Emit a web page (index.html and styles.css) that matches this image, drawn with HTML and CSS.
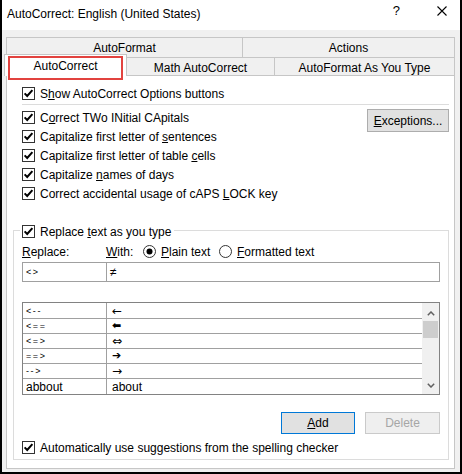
FILE: index.html
```html
<!DOCTYPE html>
<html>
<head>
<meta charset="utf-8">
<link rel="stylesheet" href="styles.css">
</head>
<body>
<div class="window">
  <div class="titlebar">
    <span class="title">AutoCorrect: English (United States)</span>
    <span class="help">?</span>
    <svg class="close" viewBox="0 0 10 10"><path d="M0.5 0.5 L9.5 9.5 M9.5 0.5 L0.5 9.5" stroke="#000" stroke-width="1.1" fill="none"/></svg>
  </div>
  <div class="client">
    <div class="tabrow back">
      <div class="tab t-autoformat">AutoFormat</div>
      <div class="tab t-actions">Actions</div>
    </div>
    <div class="tabrow front">
      <div class="tab sel">AutoCorrect<span class="focus"></span></div>
      <div class="tab t-math">Math AutoCorrect</div>
      <div class="tab t-afayt">AutoFormat As You Type</div>
    </div>
    <div class="panel">
      <div class="opt">
        <svg class="cb" viewBox="0 0 13 13"><rect x="0.5" y="0.5" width="12" height="12" fill="#fff" stroke="#333"/><path d="M2.6 6.4 L5.2 9 L10.4 3.2" fill="none" stroke="#000" stroke-width="2"/></svg>
        <span>S<u>h</u>ow AutoCorrect Options buttons</span>
      </div>
      <div class="sep"></div>
      <div class="sec">
        <div class="checks">
          <div class="opt">
            <svg class="cb" viewBox="0 0 13 13"><rect x="0.5" y="0.5" width="12" height="12" fill="#fff" stroke="#333"/><path d="M2.6 6.4 L5.2 9 L10.4 3.2" fill="none" stroke="#000" stroke-width="2"/></svg>
            <span>C<u>o</u>rrect TWo INitial CApitals</span>
          </div>
          <div class="opt">
            <svg class="cb" viewBox="0 0 13 13"><rect x="0.5" y="0.5" width="12" height="12" fill="#fff" stroke="#333"/><path d="M2.6 6.4 L5.2 9 L10.4 3.2" fill="none" stroke="#000" stroke-width="2"/></svg>
            <span>Capitalize first letter of <u>s</u>entences</span>
          </div>
          <div class="opt">
            <svg class="cb" viewBox="0 0 13 13"><rect x="0.5" y="0.5" width="12" height="12" fill="#fff" stroke="#333"/><path d="M2.6 6.4 L5.2 9 L10.4 3.2" fill="none" stroke="#000" stroke-width="2"/></svg>
            <span>Capitalize first letter of table <u>c</u>ells</span>
          </div>
          <div class="opt">
            <svg class="cb" viewBox="0 0 13 13"><rect x="0.5" y="0.5" width="12" height="12" fill="#fff" stroke="#333"/><path d="M2.6 6.4 L5.2 9 L10.4 3.2" fill="none" stroke="#000" stroke-width="2"/></svg>
            <span>Capitalize <u>n</u>ames of days</span>
          </div>
          <div class="opt">
            <svg class="cb" viewBox="0 0 13 13"><rect x="0.5" y="0.5" width="12" height="12" fill="#fff" stroke="#333"/><path d="M2.6 6.4 L5.2 9 L10.4 3.2" fill="none" stroke="#000" stroke-width="2"/></svg>
            <span>Correct accidental usage of cAPS <u>L</u>OCK key</span>
          </div>
        </div>
        <div class="btn exc"><span><u>E</u>xceptions...</span></div>
      </div>
      <div class="group">
        <div class="legend">
          <svg class="cb" viewBox="0 0 13 13"><rect x="0.5" y="0.5" width="12" height="12" fill="#fff" stroke="#333"/><path d="M2.6 6.4 L5.2 9 L10.4 3.2" fill="none" stroke="#000" stroke-width="2"/></svg>
          <span>Replace <u>t</u>ext as you type</span>
        </div>
        <div class="labels">
          <span class="lbl-replace"><u>R</u>eplace:</span>
          <span class="lbl-with"><u>W</u>ith:</span>
          <svg class="rb" viewBox="0 0 13 13"><circle cx="6.5" cy="6.5" r="6" fill="#fff" stroke="#333"/><circle cx="6.5" cy="6.5" r="3" fill="#000"/></svg>
          <span class="lbl-plain"><u>P</u>lain text</span>
          <svg class="rb" viewBox="0 0 13 13"><circle cx="6.5" cy="6.5" r="6" fill="#fff" stroke="#333"/></svg>
          <span><u>F</u>ormatted text</span>
        </div>
        <div class="inputs">
          <div class="in1"><span class="sym">&lt;&gt;</span></div>
          <div class="in2"><span>≠</span></div>
        </div>
        <div class="list">
          <div class="rows">
            <div class="row first"><div class="c1"><span class="sym">&lt;--</span></div><div class="c2"><span class="arr">←</span></div></div>
            <div class="row"><div class="c1"><span class="sym">&lt;==</span></div><div class="c2"><span class="arr bold">⬅</span></div></div>
            <div class="row"><div class="c1"><span class="sym">&lt;=&gt;</span></div><div class="c2"><span class="arr">⇔</span></div></div>
            <div class="row"><div class="c1"><span class="sym">==&gt;</span></div><div class="c2"><span class="arr bold">➔</span></div></div>
            <div class="row"><div class="c1"><span class="sym">--&gt;</span></div><div class="c2"><span class="arr">→</span></div></div>
            <div class="row last"><div class="c1"><span>abbout</span></div><div class="c2"><span>about</span></div></div>
          </div>
          <div class="sb">
            <div class="sb-btn up"><svg viewBox="0 0 8 5"><path d="M0.8 4.2 L4 1 L7.2 4.2" fill="none" stroke="#606060" stroke-width="1.5"/></svg></div>
            <div class="thumb"></div>
            <div class="sb-space"></div>
            <div class="sb-btn down"><svg viewBox="0 0 8 5"><path d="M0.8 0.8 L4 4 L7.2 0.8" fill="none" stroke="#606060" stroke-width="1.5"/></svg></div>
          </div>
        </div>
        <div class="btns">
          <div class="btn add"><span><u>A</u>dd</span></div>
          <div class="btn del"><span>Delete</span></div>
        </div>
        <div class="opt inner">
          <svg class="cb" viewBox="0 0 13 13"><rect x="0.5" y="0.5" width="12" height="12" fill="#fff" stroke="#333"/><path d="M2.6 6.4 L5.2 9 L10.4 3.2" fill="none" stroke="#000" stroke-width="2"/></svg>
          <span>Automatically use sug<u>g</u>estions from the spelling checker</span>
        </div>
      </div>
    </div>
  </div>
</div>
</body>
</html>
```

FILE: styles.css
```css
* { box-sizing: border-box; }
html, body { margin: 0; padding: 0; }
body {
  width: 462px;
  height: 474px;
  overflow: hidden;
  font-family: "Liberation Sans", Arial, sans-serif;
  font-size: 12px;
  color: #000;
  background: #fff;
}
u { text-underline-offset: 1px; }

.window {
  width: 462px;
  height: 474px;
  border: 2px solid #000;
  border-top: none;
  display: flex;
  flex-direction: column;
  background: #f0f0f0;
}

.titlebar {
  height: 30px;
  flex: none;
  background: #fff;
  display: flex;
  align-items: flex-start;
}
.title {
  margin-left: 5px;
  margin-top: 7px;
  line-height: 14px;
  white-space: nowrap;
}
.help {
  margin-left: auto;
  margin-top: 4px;
  margin-right: 37px;
  font-size: 13px;
  line-height: 13px;
}
.close {
  width: 10px;
  height: 10px;
  margin-top: 6px;
  margin-right: 13px;
  flex: none;
}

.client {
  flex: 1;
  display: flex;
  flex-direction: column;
  padding-top: 7px;
}

.tabrow { display: flex; flex: none; }
.tabrow.back { margin-left: 4px; }
.tabrow.front { margin-left: 2px; margin-top: -3px; align-items: flex-end; }

.tab {
  border: 1px solid #c6c6c6;
  border-bottom: none;
  background: #f0f0f0;
  display: flex;
  align-items: center;
  justify-content: center;
  white-space: nowrap;
  flex: none;
}
.back .tab { height: 20px; padding-top: 1px; }
.t-autoformat { width: 237px; }
.t-actions { width: 213px; margin-left: -1px; }
.tab.sel {
  width: 123px;
  height: 22px;
  background: #fff;
  position: relative;
  z-index: 1;
  padding-top: 1px;
}
.t-math { width: 149px; height: 19px; margin-left: -1px; padding-top: 1px; }
.t-afayt { width: 181px; height: 19px; margin-left: -1px; padding-top: 1px; }
.focus {
  position: absolute;
  left: 3px;
  top: 1px;
  width: 115px;
  height: 24px;
  border: 2px solid #e2433f;
}

.panel {
  flex: none;
  margin: -1px 5px 0 4px;
  border: 1px solid #c6c6c6;
  background: #fff;
  padding: 8px 0 8px 0;
}

.opt {
  display: flex;
  align-items: center;
  height: 19px;
  padding-left: 15px;
  white-space: nowrap;
}
.opt.inner { padding-left: 0; margin-top: 4px; }
.cb { width: 13px; height: 13px; margin-right: 5px; flex: none; }
.rb { width: 13px; height: 13px; margin-right: 5px; flex: none; }

.sep {
  height: 1px;
  background: #dcdcdc;
  margin: 1px 5px 0 15px;
}

.sec { display: flex; margin-top: 3px; }
.checks { flex: 1; }

.btn {
  height: 22px;
  border: 1px solid #adadad;
  background: #e1e1e1;
  display: flex;
  align-items: center;
  justify-content: center;
  flex: none;
  white-space: nowrap;
}
.exc { width: 82px; height: 23px; margin-top: 1px; margin-right: 5px; }

.group {
  margin: 27px 5px 0 6px;
  border: 1px solid #dcdcdc;
  padding: 0 8px 2px 8px;
}
.legend {
  display: flex;
  align-items: center;
  height: 19px;
  margin-top: -9px;
  margin-left: -2px;
  padding: 0 3px 0 2px;
  background: #fff;
  width: fit-content;
  white-space: nowrap;
}
.labels {
  display: flex;
  align-items: center;
  height: 19px;
  margin-top: 1px;
  white-space: nowrap;
}
.lbl-replace { width: 84px; flex: none; }
.lbl-with { width: 37px; flex: none; }
.lbl-plain { width: 58px; flex: none; }

.inputs {
  display: flex;
  height: 20px;
  margin-top: 1px;
  border: 1px solid #a0a0a0;
  background: #fff;
}
.in1 {
  width: 84px;
  flex: none;
  border-right: 1px solid #a0a0a0;
  padding-left: 3px;
  display: flex;
  align-items: center;
}
.in2 {
  flex: 1;
  padding-left: 3px;
  display: flex;
  align-items: center;
}
.sym { font-size: 9px; letter-spacing: 1.6px; }

.list {
  margin-top: 20px;
  height: 93px;
  border: 1px solid #828282;
  background: #fff;
  display: flex;
}
.rows { flex: 1; display: flex; flex-direction: column; }
.row {
  display: flex;
  height: 15px;
  border-bottom: 1px solid #a0a0a0;
  flex: none;
}
.row.first { height: 16px; }
.row.last { height: 15px; border-bottom: none; }
.c1 {
  width: 84px;
  flex: none;
  border-right: 1px solid #a0a0a0;
  padding-left: 3px;
  display: flex;
  align-items: center;
}
.c2 {
  flex: 1;
  padding-left: 5px;
  display: flex;
  align-items: center;
}
.arr { font-family: "DejaVu Sans", sans-serif; font-size: 12px; line-height: 12px; }
.arr.bold { font-size: 11px; font-weight: bold; }

.sb {
  width: 17px;
  flex: none;
  background: #f0f0f0;
  display: flex;
  flex-direction: column;
  align-items: center;
}
.sb-btn {
  width: 17px;
  height: 17px;
  flex: none;
  display: flex;
  justify-content: center;
  align-items: center;
}
.sb-btn.up { align-items: flex-start; padding-top: 8px; }
.sb-btn svg { width: 8px; height: 5px; }
.thumb { width: 15px; height: 17px; background: #cdcdcd; margin-top: 1px; flex: none; }
.sb-space { flex: 1; }

.btns {
  display: flex;
  justify-content: flex-end;
  gap: 10px;
  margin-top: 17px;
}
.add { width: 74px; border-color: #0078d7; }
.del { width: 75px; background: #efefef; border-color: #cacaca; color: #a6a6a6; }
```
